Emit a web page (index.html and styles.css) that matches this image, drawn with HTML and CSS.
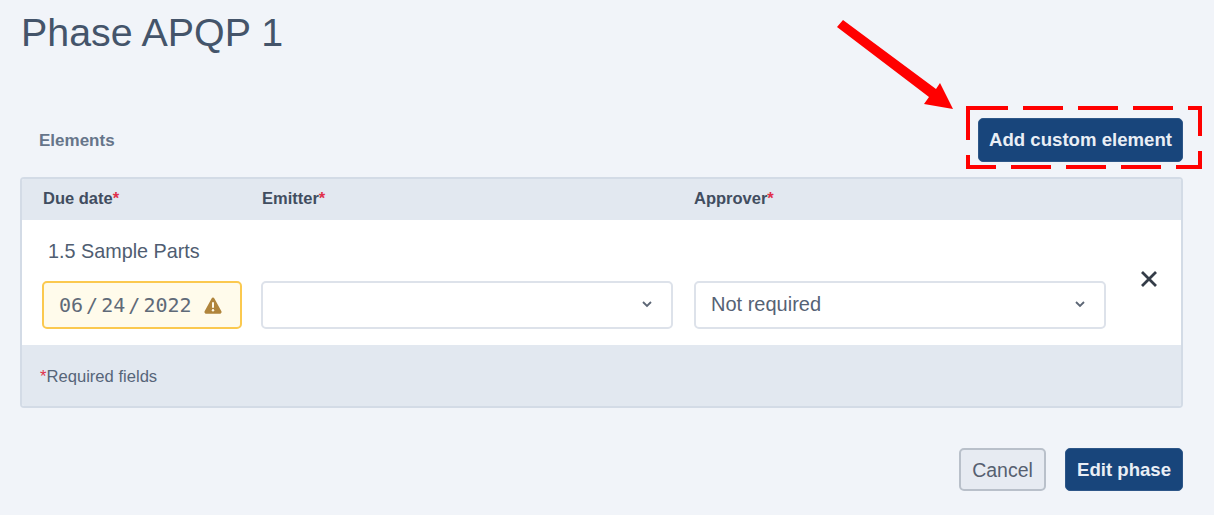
FILE: index.html
```html
<!DOCTYPE html>
<html lang="en">
<head>
    <meta charset="UTF-8">
    <title>Phase APQP 1</title>
    <link rel="stylesheet" href="styles.css">
</head>
<body>
    <div class="page">
        <h1 class="title">Phase APQP 1</h1>
        <div class="toolbar">
            <span class="toolbarLabel">Elements</span>
            <button class="btn btnPrimary btnAdd">Add custom element</button>
        </div>
        <div class="card">
            <div class="cols cardHead">
                <span>Due date<i class="star">*</i></span>
                <span>Emitter<i class="star">*</i></span>
                <span>Approver<i class="star">*</i></span>
            </div>
            <div class="cardBody">
                <div class="rowName">1.5 Sample Parts</div>
                <div class="cols">
                    <div class="field fieldDate">
                        <span class="dateText">06 / 24 / 2022</span>
                        <svg class="warn" width="18" height="17" viewBox="0 0 18 17">
                            <path d="M9 .6c.6 0 1.100.3 1.400.8l7 12.900c.6 1.100-.2 2.400-1.400 2.400H2c-1.200 0-2-1.300-1.400-2.400l7-12.900C7.900.9 8.400.6 9 .6z" fill="#b0853c"/>
                            <rect x="8" y="5" width="2" height="6" rx="1" fill="#fffbeb"/>
                            <circle cx="9" cy="13.300" r="1.200" fill="#fffbeb"/>
                        </svg>
                    </div>
                    <div class="field fieldSelect">
                        <span></span>
                        <svg class="chevron" width="12" height="8" viewBox="0 0 12 8"><path d="M2 2l4 4 4-4" fill="none" stroke="#5c6675" stroke-width="1.800"/></svg>
                    </div>
                    <div class="field fieldSelect">
                        <span>Not required</span>
                        <svg class="chevron" width="12" height="8" viewBox="0 0 12 8"><path d="M2 2l4 4 4-4" fill="none" stroke="#5c6675" stroke-width="1.800"/></svg>
                    </div>
                    <svg class="remove" width="18" height="18" viewBox="0 0 18 18"><path d="M2 2l14 14M16 2L2 16" fill="none" stroke="#343c48" stroke-width="2.800"/></svg>
                </div>
            </div>
            <div class="cardFoot"><i class="star">*</i>Required fields</div>
        </div>
        <div class="actions">
            <button class="btn btnCancel">Cancel</button>
            <button class="btn btnPrimary btnEdit">Edit phase</button>
        </div>
    </div>
    <!-- red annotation on top of the screenshot -->
    <svg class="annotation" width="1214" height="515" viewBox="0 0 1214 515">
        <path d="M837 27L843 20L936 89L940 83L953 109L924 104L929 97Z" fill="#ff0000"/>
        <rect x="968" y="108" width="232" height="59" fill="none" stroke="#ff0000" stroke-width="4" stroke-dasharray="40 15"/>
    </svg>
</body>
</html>
```

FILE: styles.css
```css
*{
    padding: 0;
    margin: 0;
    box-sizing: border-box;
}
body{
    position: relative;
    width: 1214px;
    height: 515px;
    overflow: hidden;
    background-color: #f1f4f9;
    font-family: "Liberation Sans", Arial, sans-serif;
    color: #4a5568;
}
.page{
    padding: 9px 31px 0 20px;
}
.title{
    height: 109px;
    padding-left: 1px;
    font-size: 39.400px;
    line-height: 46px;
    font-weight: normal;
    color: #44546a;
}
.toolbar{
    display: flex;
    justify-content: space-between;
    align-items: center;
    height: 44px;
    padding-left: 19px;
}
.toolbarLabel{
    margin-top: 1px;
    font-size: 17px;
    font-weight: bold;
    color: #66758a;
}
.card{
    margin-top: 15px;
    border: 2px solid #d3dbe6;
    border-radius: 4px;
    overflow: hidden;
    background-color: #fff;
}
.cols{
    display: grid;
    grid-template-columns: 219px 433px 412px 1fr;
    align-items: center;
    padding-left: 20px;
}
.cardHead{
    height: 41px;
    padding: 0 0 2px 21px;
    grid-template-columns: 219px 432px 412px 1fr;
    background-color: #e2e8f0;
    font-size: 16.500px;
    font-weight: bold;
    color: #414d60;
}
.star{
    font-style: normal;
    color: #e0314b;
}
.cardBody{
    height: 125px;
    padding-top: 18px;
    background-color: #fff;
}
.rowName{
    height: 43px;
    padding-left: 26px;
    font-size: 19.800px;
    line-height: 26px;
    color: #4f5d71;
}
.field{
    display: flex;
    justify-content: space-between;
    align-items: center;
    width: 412px;
    height: 48px;
    padding: 0 18px 2px 15px;
    border: 2px solid #dde2ea;
    border-radius: 5px;
    background-color: #fff;
    font-size: 20px;
    color: #566275;
}
.fieldDate{
    width: 200px;
    padding: 0 18px 0 15px;
    border-color: #fbc94f;
    background-color: #fffbeb;
}
.dateText{
    font-family: "DejaVu Sans Mono", monospace;
    font-size: 20px;
    word-spacing: -9px;
    color: #5f6a78;
}
.remove{
    align-self: start;
    justify-self: center;
    margin: -11px 0 0 10px;
}
.cardFoot{
    height: 61px;
    padding: 22px 0 0 18px;
    background-color: #e2e8f0;
    font-size: 16.600px;
    line-height: 20px;
    color: #566579;
}
.actions{
    display: flex;
    justify-content: flex-end;
    gap: 19px;
    margin-top: 40px;
}
.btn{
    height: 43px;
    border-radius: 5px;
    font-family: inherit;
    font-size: 18.600px;
}
.btnPrimary{
    border: 1px solid #2d5688;
    background-color: #18457b;
    font-weight: bold;
    color: #e9eef5;
}
.btnAdd{
    width: 205px;
    height: 44px;
}
.btnEdit{
    width: 118px;
}
.btnCancel{
    width: 87px;
    padding-top: 2px;
    border: 2px solid #b9c0ca;
    background-color: #e7ebf2;
    font-size: 19.500px;
    color: #566070;
}
.annotation{
    position: absolute;
    left: 0;
    top: 0;
    pointer-events: none;
}
```
